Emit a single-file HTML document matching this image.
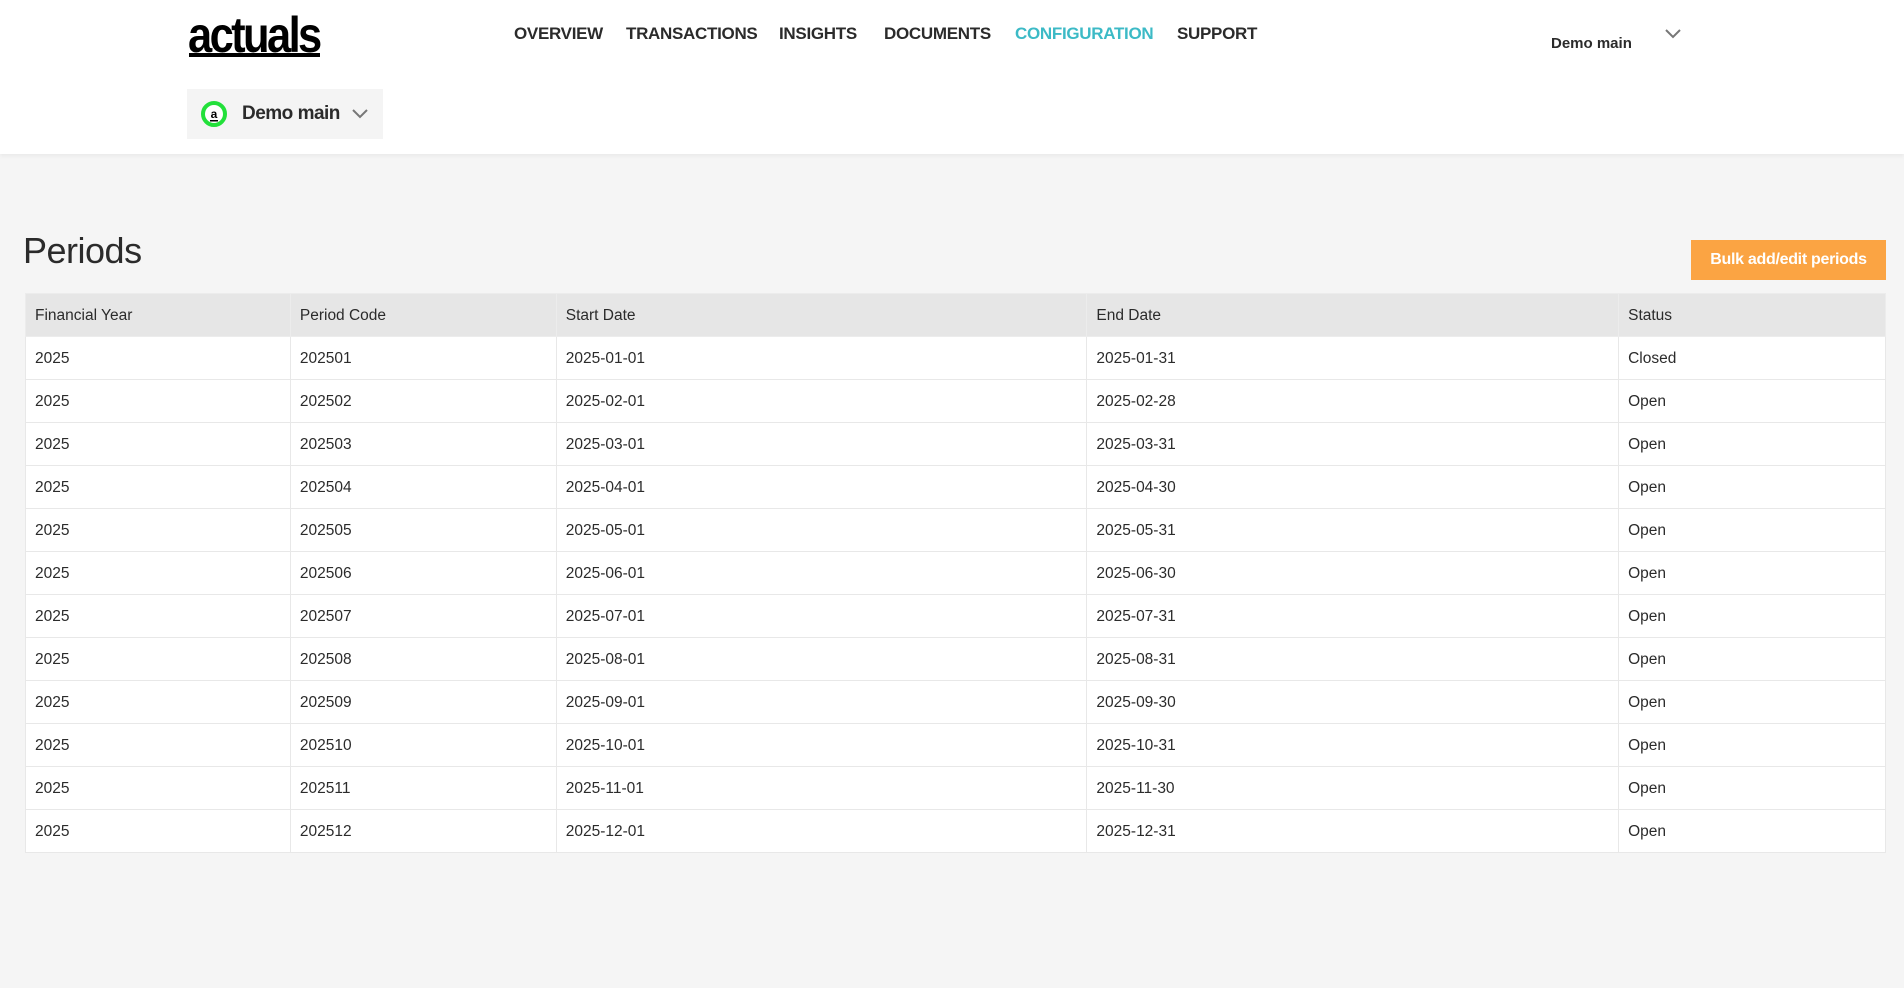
<!DOCTYPE html>
<html><head><meta charset="utf-8"><style>
*{box-sizing:border-box;margin:0;padding:0}
body{width:1904px;height:988px;background:#f5f5f5;font-family:"Liberation Sans",sans-serif;color:#2b2b2b;position:relative;overflow:hidden}
.hdr{position:absolute;left:0;top:0;width:1904px;height:154px;background:#fff;box-shadow:0 2px 4px rgba(0,0,0,0.05)}
.logo{position:absolute;left:188px;top:6px;font-size:50px;font-weight:bold;letter-spacing:-3px;color:#000;font-family:"Liberation Sans Narrow","Liberation Sans",sans-serif;transform:scaleX(0.87);transform-origin:left}
.logoline{position:absolute;left:189px;top:53px;width:131px;height:4px;background:#000}
.nav{position:absolute;top:24px;font-size:17px;font-weight:bold;color:#2b2b2b;letter-spacing:-0.3px}
.nav.act{color:#3cbac6}
.dd{position:absolute;left:187px;top:89px;width:196px;height:50px;background:#f4f4f4}
.dd .t{position:absolute;left:55px;top:14px;font-size:19px;font-weight:bold;letter-spacing:-0.5px}
.user{position:absolute;left:1551px;top:35px;font-size:15px;font-weight:bold}
h1{position:absolute;left:23px;top:230px;font-size:36px;font-weight:normal;color:#2b2b2b;letter-spacing:-0.5px}
.btn{position:absolute;left:1691px;top:240px;width:195px;height:40px;background:#fba443;color:#fff;font-weight:bold;font-size:16px;text-align:center;line-height:40px;letter-spacing:-0.3px}
table{position:absolute;left:25px;top:293px;width:1861px;border-collapse:collapse;font-size:15.5px}
td,th{height:43px;padding:1px 9px 0;text-align:left;border:1px solid #e8e8e8;font-weight:normal;background:#fff}
th{background:#e6e6e6;border-color:#ececec}
</style></head><body>
<div class="hdr">
<div class="logo">actuals</div><div class="logoline"></div>
<div class="nav" style="left:514px">OVERVIEW</div>
<div class="nav" style="left:626px">TRANSACTIONS</div>
<div class="nav" style="left:779px">INSIGHTS</div>
<div class="nav" style="left:884px">DOCUMENTS</div>
<div class="nav act" style="left:1015px">CONFIGURATION</div>
<div class="nav" style="left:1177px">SUPPORT</div>
<div class="user">Demo main</div>
<svg style="position:absolute;left:1664px;top:28px" width="18" height="12" viewBox="0 0 18 12"><path d="M2 2l7 7 7-7" stroke="#777" stroke-width="2" fill="none"/></svg>
<div class="dd">
<svg style="position:absolute;left:14px;top:12px" width="26" height="26" viewBox="0 0 26 26"><circle cx="13" cy="13" r="11" fill="#fff" stroke="#22e03a" stroke-width="4"/><text x="13" y="17" font-size="12" font-weight="bold" text-anchor="middle" fill="#000" font-family="Liberation Sans">a</text><rect x="9" y="19" width="8" height="1.5" fill="#000"/></svg>
<div class="t">Demo main</div>
<svg style="position:absolute;left:164px;top:19px" width="18" height="12" viewBox="0 0 18 12"><path d="M2 2l7 7 7-7" stroke="#777" stroke-width="2" fill="none"/></svg>
</div>
</div>
<h1>Periods</h1>
<div class="btn">Bulk add/edit periods</div>
<table>
<colgroup><col style="width:265px"><col style="width:266px"><col style="width:531px"><col style="width:532px"><col style="width:267px"></colgroup>
<tr><th>Financial Year</th><th>Period Code</th><th>Start Date</th><th>End Date</th><th>Status</th></tr>
<tr><td>2025</td><td>202501</td><td>2025-01-01</td><td>2025-01-31</td><td>Closed</td></tr>
<tr><td>2025</td><td>202502</td><td>2025-02-01</td><td>2025-02-28</td><td>Open</td></tr>
<tr><td>2025</td><td>202503</td><td>2025-03-01</td><td>2025-03-31</td><td>Open</td></tr>
<tr><td>2025</td><td>202504</td><td>2025-04-01</td><td>2025-04-30</td><td>Open</td></tr>
<tr><td>2025</td><td>202505</td><td>2025-05-01</td><td>2025-05-31</td><td>Open</td></tr>
<tr><td>2025</td><td>202506</td><td>2025-06-01</td><td>2025-06-30</td><td>Open</td></tr>
<tr><td>2025</td><td>202507</td><td>2025-07-01</td><td>2025-07-31</td><td>Open</td></tr>
<tr><td>2025</td><td>202508</td><td>2025-08-01</td><td>2025-08-31</td><td>Open</td></tr>
<tr><td>2025</td><td>202509</td><td>2025-09-01</td><td>2025-09-30</td><td>Open</td></tr>
<tr><td>2025</td><td>202510</td><td>2025-10-01</td><td>2025-10-31</td><td>Open</td></tr>
<tr><td>2025</td><td>202511</td><td>2025-11-01</td><td>2025-11-30</td><td>Open</td></tr>
<tr><td>2025</td><td>202512</td><td>2025-12-01</td><td>2025-12-31</td><td>Open</td></tr>
</table>
</body></html>
